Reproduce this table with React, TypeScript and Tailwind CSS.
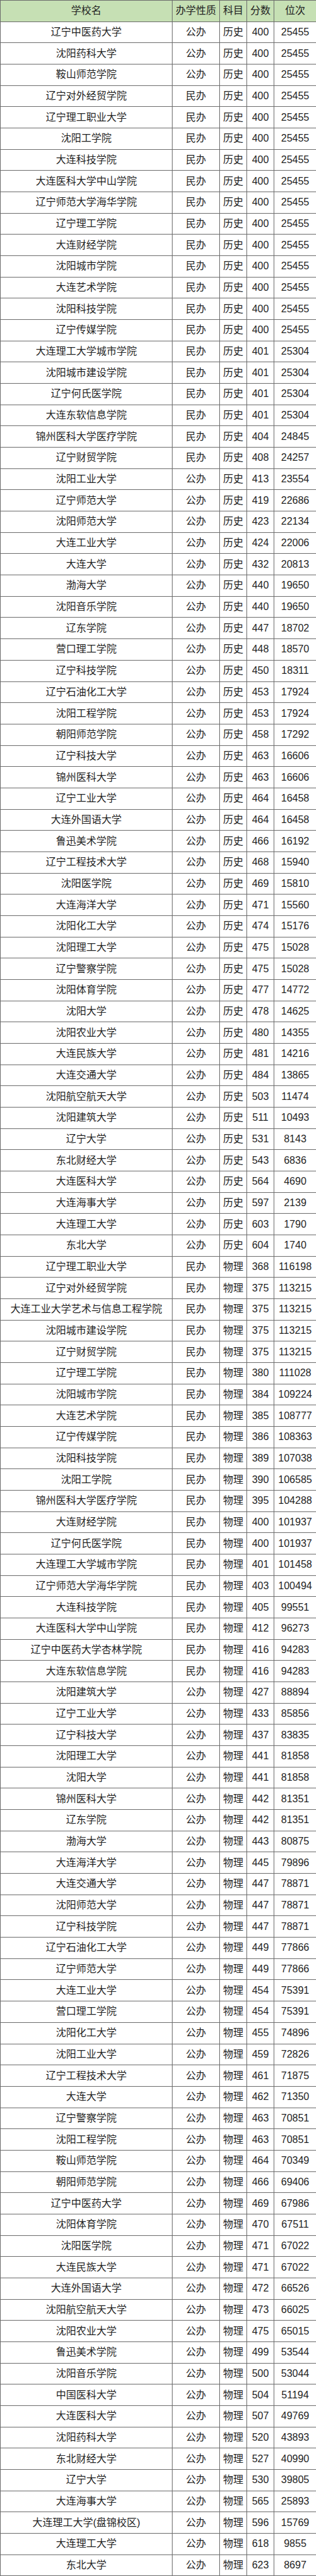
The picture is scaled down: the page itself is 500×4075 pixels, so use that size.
import React from "react";

type Row = [string, string, string, string, string];

const raw = `辽宁中医药大学|公办|历史|400|25455
沈阳药科大学|公办|历史|400|25455
鞍山师范学院|公办|历史|400|25455
辽宁对外经贸学院|民办|历史|400|25455
辽宁理工职业大学|民办|历史|400|25455
沈阳工学院|民办|历史|400|25455
大连科技学院|民办|历史|400|25455
大连医科大学中山学院|民办|历史|400|25455
辽宁师范大学海华学院|民办|历史|400|25455
辽宁理工学院|民办|历史|400|25455
大连财经学院|民办|历史|400|25455
沈阳城市学院|民办|历史|400|25455
大连艺术学院|民办|历史|400|25455
沈阳科技学院|民办|历史|400|25455
辽宁传媒学院|民办|历史|400|25455
大连理工大学城市学院|民办|历史|401|25304
沈阳城市建设学院|民办|历史|401|25304
辽宁何氏医学院|民办|历史|401|25304
大连东软信息学院|民办|历史|401|25304
锦州医科大学医疗学院|民办|历史|404|24845
辽宁财贸学院|民办|历史|408|24257
沈阳工业大学|公办|历史|413|23554
辽宁师范大学|公办|历史|419|22686
沈阳师范大学|公办|历史|423|22134
大连工业大学|公办|历史|424|22006
大连大学|公办|历史|432|20813
渤海大学|公办|历史|440|19650
沈阳音乐学院|公办|历史|440|19650
辽东学院|公办|历史|447|18702
营口理工学院|公办|历史|448|18570
辽宁科技学院|公办|历史|450|18311
辽宁石油化工大学|公办|历史|453|17924
沈阳工程学院|公办|历史|453|17924
朝阳师范学院|公办|历史|458|17292
辽宁科技大学|公办|历史|463|16606
锦州医科大学|公办|历史|463|16606
辽宁工业大学|公办|历史|464|16458
大连外国语大学|公办|历史|464|16458
鲁迅美术学院|公办|历史|466|16192
辽宁工程技术大学|公办|历史|468|15940
沈阳医学院|公办|历史|469|15810
大连海洋大学|公办|历史|471|15560
沈阳化工大学|公办|历史|474|15176
沈阳理工大学|公办|历史|475|15028
辽宁警察学院|公办|历史|475|15028
沈阳体育学院|公办|历史|477|14772
沈阳大学|公办|历史|478|14625
沈阳农业大学|公办|历史|480|14355
大连民族大学|公办|历史|481|14216
大连交通大学|公办|历史|484|13865
沈阳航空航天大学|公办|历史|503|11474
沈阳建筑大学|公办|历史|511|10493
辽宁大学|公办|历史|531|8143
东北财经大学|公办|历史|543|6836
大连医科大学|公办|历史|564|4690
大连海事大学|公办|历史|597|2139
大连理工大学|公办|历史|603|1790
东北大学|公办|历史|604|1740
辽宁理工职业大学|民办|物理|368|116198
辽宁对外经贸学院|民办|物理|375|113215
大连工业大学艺术与信息工程学院|民办|物理|375|113215
沈阳城市建设学院|民办|物理|375|113215
辽宁财贸学院|民办|物理|375|113215
辽宁理工学院|民办|物理|380|111028
沈阳城市学院|民办|物理|384|109224
大连艺术学院|民办|物理|385|108777
辽宁传媒学院|民办|物理|386|108363
沈阳科技学院|民办|物理|389|107038
沈阳工学院|民办|物理|390|106585
锦州医科大学医疗学院|民办|物理|395|104288
大连财经学院|民办|物理|400|101937
辽宁何氏医学院|民办|物理|400|101937
大连理工大学城市学院|民办|物理|401|101458
辽宁师范大学海华学院|民办|物理|403|100494
大连科技学院|民办|物理|405|99551
大连医科大学中山学院|民办|物理|412|96273
辽宁中医药大学杏林学院|民办|物理|416|94283
大连东软信息学院|民办|物理|416|94283
沈阳建筑大学|公办|物理|427|88894
辽宁工业大学|公办|物理|433|85856
辽宁科技大学|公办|物理|437|83835
沈阳理工大学|公办|物理|441|81858
沈阳大学|公办|物理|441|81858
锦州医科大学|公办|物理|442|81351
辽东学院|公办|物理|442|81351
渤海大学|公办|物理|443|80875
大连海洋大学|公办|物理|445|79896
大连交通大学|公办|物理|447|78871
沈阳师范大学|公办|物理|447|78871
辽宁科技学院|公办|物理|447|78871
辽宁石油化工大学|公办|物理|449|77866
辽宁师范大学|公办|物理|449|77866
大连工业大学|公办|物理|454|75391
营口理工学院|公办|物理|454|75391
沈阳化工大学|公办|物理|455|74896
沈阳工业大学|公办|物理|459|72826
辽宁工程技术大学|公办|物理|461|71875
大连大学|公办|物理|462|71350
辽宁警察学院|公办|物理|463|70851
沈阳工程学院|公办|物理|463|70851
鞍山师范学院|公办|物理|464|70349
朝阳师范学院|公办|物理|466|69406
辽宁中医药大学|公办|物理|469|67986
沈阳体育学院|公办|物理|470|67511
沈阳医学院|公办|物理|471|67022
大连民族大学|公办|物理|471|67022
大连外国语大学|公办|物理|472|66526
沈阳航空航天大学|公办|物理|473|66025
沈阳农业大学|公办|物理|475|65015
鲁迅美术学院|公办|物理|499|53544
沈阳音乐学院|公办|物理|500|53044
中国医科大学|公办|物理|504|51194
大连医科大学|公办|物理|507|49769
沈阳药科大学|公办|物理|520|43893
东北财经大学|公办|物理|527|40990
辽宁大学|公办|物理|530|39805
大连海事大学|公办|物理|565|25893
大连理工大学(盘锦校区)|公办|物理|596|15769
大连理工大学|公办|物理|618|9855
东北大学|公办|物理|623|8697`;

const rows: Row[] = raw.split("\n").map((l) => l.split("|") as Row);

const header = ["学校名", "办学性质", "科目", "分数", "位次"];

export default function App() {
  return (
    <div
      className="w-[500px] bg-white text-[#1f1f1f]"
      style={{ fontFamily: '"Liberation Sans", "Noto Sans CJK SC", sans-serif' }}
    >
      <table className="w-[500px] table-fixed border-collapse text-[16px] leading-none">
        <colgroup>
          <col className="w-[272px]" />
          <col className="w-[75px]" />
          <col className="w-[43px]" />
          <col className="w-[43px]" />
          <col className="w-[67px]" />
        </colgroup>
        <thead>
          <tr className="h-[33.68px] bg-[#c6e0b4]">
            {header.map((h) => (
              <th
                key={h}
                className="border border-[#6b6b6b] p-0 text-center font-normal whitespace-nowrap text-[#222]"
              >
                {h}
              </th>
            ))}
          </tr>
        </thead>
        <tbody>
          {rows.map((r, i) => (
            <tr key={i} className="h-[33.68px]">
              {r.map((c, j) => (
                <td
                  key={j}
                  className="border border-[#6b6b6b] p-0 text-center whitespace-nowrap"
                >
                  {c}
                </td>
              ))}
            </tr>
          ))}
        </tbody>
      </table>
    </div>
  );
}
